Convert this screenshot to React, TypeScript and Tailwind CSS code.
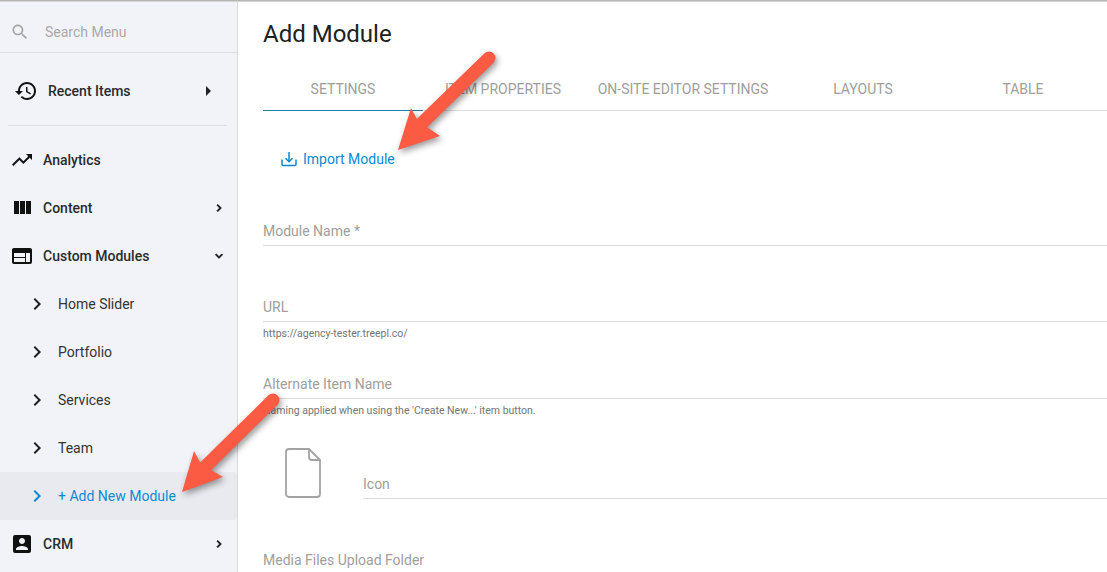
import type {ReactNode} from "react";

const paths = {
    search: "M15.5 14h-.79l-.28-.27C15.41 12.59 16 11.11 16 9.5 16 5.91 13.09 3 9.5 3S3 5.91 3 9.5 5.91 16 9.5 16c1.61 0 3.09-.59 4.23-1.57l.27.28v.79l5 4.99L20.49 19l-4.99-5zm-6 0C7.01 14 5 11.99 5 9.5S7.01 5 9.5 5 14 7.01 14 9.5 11.99 14 9.5 14z",
    history: "M13 3c-4.97 0-9 4.03-9 9H1l3.89 3.89.07.14L9 12H6c0-3.87 3.13-7 7-7s7 3.13 7 7-3.13 7-7 7c-1.93 0-3.68-.79-4.94-2.06l-1.42 1.42C8.27 19.99 10.51 21 13 21c4.97 0 9-4.03 9-9s-4.03-9-9-9zm-1 5v5l4.28 2.54.72-1.21-3.5-2.08V8H12z",
    trending: "M16 6l2.29 2.29-4.88 4.88-4-4L2 16.59 3.41 18l6-6 4 4 6.3-6.29L22 12V6z",
    columns: "M10 18h5V5h-5v13zm-6 0h5V5H4v13zM16 5v13h5V5h-5z",
    web: "M20 4H4c-1.1 0-1.99.9-1.99 2L2 18c0 1.1.9 2 2 2h16c1.1 0 2-.9 2-2V6c0-1.1-.9-2-2-2zm-5 14H4v-4h11v4zm0-5H4V9h11v4zm5 5h-4V9h4v9z",
    account: "M3 5v14c0 1.1.89 2 2 2h14c1.1 0 2-.9 2-2V5c0-1.1-.9-2-2-2H5c-1.11 0-2 .9-2 2zm12 4c0 1.66-1.34 3-3 3s-3-1.34-3-3 1.34-3 3-3 3 1.34 3 3zm-9 8c0-2 4-3.1 6-3.1s6 1.1 6 3.1v1H6v-1z",
    chevron: "M10 6L8.59 7.41 13.17 12l-4.58 4.59L10 18l6-6z",
    expand: "M16.59 8.59L12 13.17 7.41 8.59 6 10l6 6 6-6z",
    caret: "M10 17l5-5-5-5v10z",
};

function Icon({d, className}: { d: string; className: string }) {
    return (
        <svg viewBox="0 0 24 24" fill="currentColor" className={className}>
            <path d={d}/>
        </svg>
    );
}

function NavRow({icon, label, after}: { icon: string; label: string; after?: string }) {
    return (
        <div className="h-12 flex items-center pl-[10px] pr-[11px] text-[14px] font-medium text-[#2b2b2b]">
            <Icon d={icon} className="w-[24px] h-[24px] text-[#111] shrink-0"/>
            <span className="ml-[9px] flex-1">{label}</span>
            {after && <Icon d={after} className="w-[14px] h-[14px] text-[#111] stroke-[#111] stroke-[1.5px]"/>}
        </div>
    );
}

function SubRow({label, active}: { label: string; active?: boolean }) {
    return (
        <div
            className={`h-12 flex items-center pl-[25px] text-[14px] ${active ? "bg-[#e9eaef] text-[#0a8ad6] rounded-r-[3px]" : "text-[#333]"}`}>
            <Icon d={paths.chevron} className={`w-[24px] h-[24px] ${active ? "text-[#0a8ad6]" : "text-[#222]"}`}/>
            <span className="ml-[9px]">{label}</span>
        </div>
    );
}

function Field({label, hint, className}: { label: string; hint?: ReactNode; className: string }) {
    return (
        <div className={className}>
            <div className="h-[25px] border-b border-[#dcdcdc] text-[14px] leading-[20px] text-[#9e9e9e]">{label}</div>
            {hint && <div className="mt-[6px] text-[10.5px] leading-[12px] text-[#757575]">{hint}</div>}
        </div>
    );
}

function Arrow({className, head, x1, y1, x2, y2}: {
    className: string; head: string; x1: number; y1: number; x2: number; y2: number
}) {
    return (
        <svg viewBox="0 0 130 120" className={`absolute w-[130px] h-[120px] drop-shadow-[2px_3px_3px_rgba(0,0,0,0.4)] ${className}`}>
            <line x1={x1} y1={y1} x2={x2} y2={y2} stroke="#fb5a43" strokeWidth="13" strokeLinecap="round"/>
            <polygon points={head} fill="#fb5a43"/>
        </svg>
    );
}

const tabs = [
    {label: "SETTINGS", width: "w-[160px]"},
    {label: "ITEM PROPERTIES", width: "w-[160px]"},
    {label: "ON-SITE EDITOR SETTINGS", width: "w-[200px]"},
    {label: "LAYOUTS", width: "w-[160px]"},
    {label: "TABLE", width: "w-[160px]"},
];

export default function App() {
    return (
        <div className="relative w-[1107px] h-[572px] overflow-hidden bg-white font-['Roboto',sans-serif]">
            <div className="h-[2px] bg-gradient-to-b from-[#a8a8a8] to-[#e4e4e4]"/>
            <div className="flex h-[570px]">
                {/* Sidebar */}
                <aside className="w-[238px] shrink-0 bg-[#f2f3f8] border-r border-[#d9dade]">
                    <div className="h-[51px] flex items-center pl-[10px] pt-[10px] border-b border-[#dcdde1] text-[14px] text-[#a9a9a9]">
                        <Icon d={paths.search} className="w-[20px] h-[20px] text-[#a6a6a6]"/>
                        <span className="ml-[15px]">Search Menu</span>
                    </div>

                    <div className="ml-[8px] mr-[10px] h-[73px] pt-[4px] flex items-center border-b border-[#dcdde1] pl-[6px] pr-[7px] text-[14px] font-medium text-[#2b2b2b]">
                        <Icon d={paths.history} className="w-[24px] h-[24px] text-[#111]"/>
                        <span className="ml-[10px] flex-1">Recent Items</span>
                        <Icon d={paths.caret} className="w-[24px] h-[24px] text-[#222]"/>
                    </div>

                    <div className="h-[10px]"/>
                    <NavRow icon={paths.trending} label="Analytics"/>
                    <NavRow icon={paths.columns} label="Content" after={paths.chevron}/>
                    <NavRow icon={paths.web} label="Custom Modules" after={paths.expand}/>
                    <SubRow label="Home Slider"/>
                    <SubRow label="Portfolio"/>
                    <SubRow label="Services"/>
                    <SubRow label="Team"/>
                    <SubRow label="+ Add New Module" active/>
                    <NavRow icon={paths.account} label="CRM" after={paths.chevron}/>
                </aside>

                {/* Main */}
                <main className="flex-1 pl-[25px]">
                    <h1 className="mt-[17px] text-[24px] leading-[30px] text-[#212121]">Add Module</h1>

                    <div className="mt-[30px] flex h-[32px] border-b border-[#dcdcdc]">
                        {tabs.map((tab, i) => (
                            <div key={tab.label}
                                 className={`${tab.width} h-[32px] shrink-0 text-center text-[14px] leading-[20px] text-[#9e9e9e] ${i === 0 ? "border-b border-[#1b82c0]" : ""}`}>
                                {tab.label}
                            </div>
                        ))}
                    </div>

                    <div className="mt-[37px] ml-[18px] flex items-center text-[14px] leading-[22px] text-[#0a8ad6]">
                        <svg viewBox="0 0 16 16" fill="none" stroke="currentColor" strokeWidth="1.5" className="w-[16px] h-[16px]">
                            <path d="M1 8.5V13.2c0 .7.5 1.2 1.2 1.2h11.6c.7 0 1.2-.5 1.2-1.2V8.5"/>
                            <path d="M8 1v9.5M4.5 7.2 8 10.7l3.5-3.5"/>
                        </svg>
                        <span className="ml-[6px]">Import Module</span>
                    </div>

                    <Field label="Module Name *" className="mt-[51px]"/>
                    <Field label="URL" hint="https://agency-tester.treepl.co/" className="mt-[51px]"/>
                    <Field label="Alternate Item Name" hint="Naming applied when using the 'Create New...' item button."
                           className="mt-[34px]"/>

                    <div className="mt-[31px] flex items-end">
                        <svg viewBox="0 0 36 50" fill="none" stroke="#a3a3a3" strokeWidth="1.8" strokeLinejoin="round"
                             className="ml-[22px] mb-[1px] w-[36px] h-[50px] shrink-0">
                            <path d="M4 1h20l11 11v34a3 3 0 0 1-3 3H4a3 3 0 0 1-3-3V4a3 3 0 0 1 3-3z"/>
                            <path d="M24 1v8a3 3 0 0 0 3 3h8"/>
                        </svg>
                        <Field label="Icon" className="ml-[42px] flex-1"/>
                    </div>

                    <div className="mt-[51px] text-[14px] leading-[20px] text-[#9e9e9e]">Media Files Upload Folder</div>
                </main>
            </div>

            {/* Annotation arrows */}
            <Arrow className="left-[385px] top-[45px]" x1={104} y1={13} x2={35} y2={80}
                   head="13,105 26,63 33,76 55,91"/>
            <Arrow className="left-[170px] top-[388px]" x1={103} y1={12} x2={34} y2={80}
                   head="12,104 24,63 31,76 53,89"/>
        </div>
    );
}
